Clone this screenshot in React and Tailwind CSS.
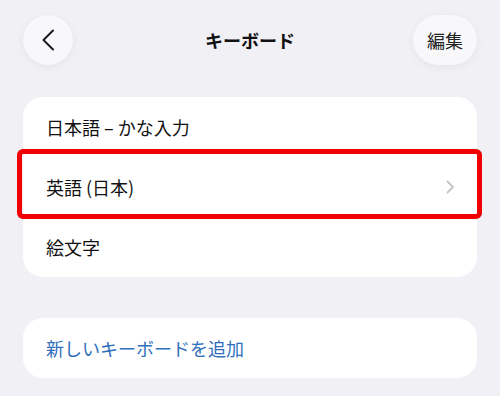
import React from "react";

const FONT = { fontFamily: '"Noto Sans CJK JP", "Noto Sans", sans-serif' };

const ROWS = ["日本語 – かな入力", "英語 (日本)", "絵文字"];

const App = () => {
  return (
    <div className="w-[500px] h-[396px] bg-[#f0f0f5] overflow-hidden" style={FONT}>
      <div className="grid grid-cols-[1fr_auto_1fr] items-center px-[23px] pt-[15px]">
        <button className="w-[50px] h-[50px] rounded-full bg-[#f8f8fa] shadow-[0_2px_8px_rgba(0,0,0,0.05)] flex items-center justify-center">
          <svg width="14" height="22" viewBox="0 0 14 22" fill="none">
            <path d="M12 1.5 L2.5 11 L12 20.5" stroke="#1c1c1e" strokeWidth="2" strokeLinecap="round" strokeLinejoin="round" />
          </svg>
        </button>
        <div className="text-[18px] font-bold text-[#111] leading-none">キーボード</div>
        <button className="justify-self-end w-[64px] h-[50px] rounded-full bg-[#f8f8fa] shadow-[0_2px_8px_rgba(0,0,0,0.05)] text-[18px] text-[#222] flex items-center justify-center">
          編集
        </button>
      </div>

      <div className="mx-[23px] mt-[32px] bg-white rounded-[20px]">
        {ROWS.map((label, i) => (
          <div key={label} className="relative h-[60px] flex items-center justify-between pl-[23px] pr-[22px]">
            <span className="text-[18px] text-[#111]">{label}</span>
            {i === 1 && (
              <>
                <svg width="9" height="14" viewBox="0 0 9 14" fill="none">
                  <path d="M1.5 1.5 L7 7 L1.5 12.5" stroke="#c4c4c7" strokeWidth="1.8" strokeLinecap="round" strokeLinejoin="round" />
                </svg>
                <div className="absolute -top-[8px] -bottom-[2px] -left-[6px] -right-[5px] border-[5px] border-[#f00000] rounded-[6px]" />
              </>
            )}
          </div>
        ))}
      </div>

      <div className="mx-[23px] mt-[41px] h-[60px] bg-white rounded-[20px] flex items-center pl-[23px]">
        <span className="text-[18px] text-[#2f6fbc]">新しいキーボードを追加</span>
      </div>
    </div>
  );
};

export default App;
